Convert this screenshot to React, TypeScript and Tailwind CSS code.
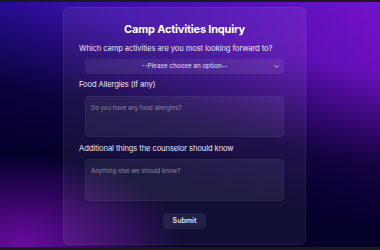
import { ChevronDown } from "lucide-react";

export default function App() {
  return (
    <div className="w-[380px] h-[250px] bg-[#1a1a1c] pt-[2px] pb-[3px] font-['Inter',sans-serif]">
      <div className="h-full flex items-start pl-[63px] pt-[5px] bg-[radial-gradient(ellipse_42%_38%_at_6%_100%,rgba(112,12,170,0.95),transparent),linear-gradient(192deg,rgba(5,0,42,0)_0%,rgba(5,0,42,0.1)_22%,rgba(5,0,42,0.85)_50%,#03002a_70%),linear-gradient(to_right,#2e10a8,#7412ca)]">
        <div className="w-[243px] h-[238px] rounded-md bg-white/[0.06] border border-white/[0.05] px-[15px] flex flex-col">
          <h1 className="text-[11px] font-bold tracking-[-0.2px] text-white text-center mt-[13px] leading-4">Camp Activities Inquiry</h1>

          <label className="text-[7.6px] tracking-[-0.1px] text-[#ebe8f4] mt-[6px] leading-3 whitespace-nowrap">Which camp activities are you most looking forward to?</label>
          <div className="mx-[6px] mt-[4px] h-[15px] rounded-[4px] bg-white/[0.07] relative flex items-center justify-center">
            <span className="text-[6.4px] text-[#e4e0ee]">--Please choose an option--</span>
            <ChevronDown size={7} strokeWidth={3} className="absolute right-[4px] text-[#e4e0ee]" />
          </div>

          <label className="text-[7.6px] tracking-[-0.1px] text-[#ebe8f4] mt-[5px] leading-3">Food Allergies (If any)</label>
          <div className="mx-[6px] mt-[5px] h-[41px] rounded-[4px] bg-white/[0.06] border border-white/[0.04] px-[5px] pt-[3px] leading-[8px]">
            <span className="text-[6px] text-[#8d8aa0]">Do you have any food allergies?</span>
          </div>

          <label className="text-[7.6px] tracking-[-0.1px] text-[#ebe8f4] mt-[6px] leading-3">Additional things the counselor should know</label>
          <div className="mx-[6px] mt-[4px] h-[42px] rounded-[4px] bg-white/[0.06] border border-white/[0.04] px-[5px] pt-[3px] leading-[8px]">
            <span className="text-[6px] text-[#8d8aa0]">Anything else we should know?</span>
          </div>

          <button className="self-center mt-[12px] w-[43px] h-[16px] rounded-[4px] bg-white/[0.07] text-[7px] font-semibold text-[#e4e0ee]">Submit</button>
        </div>
      </div>
    </div>
  );
}
